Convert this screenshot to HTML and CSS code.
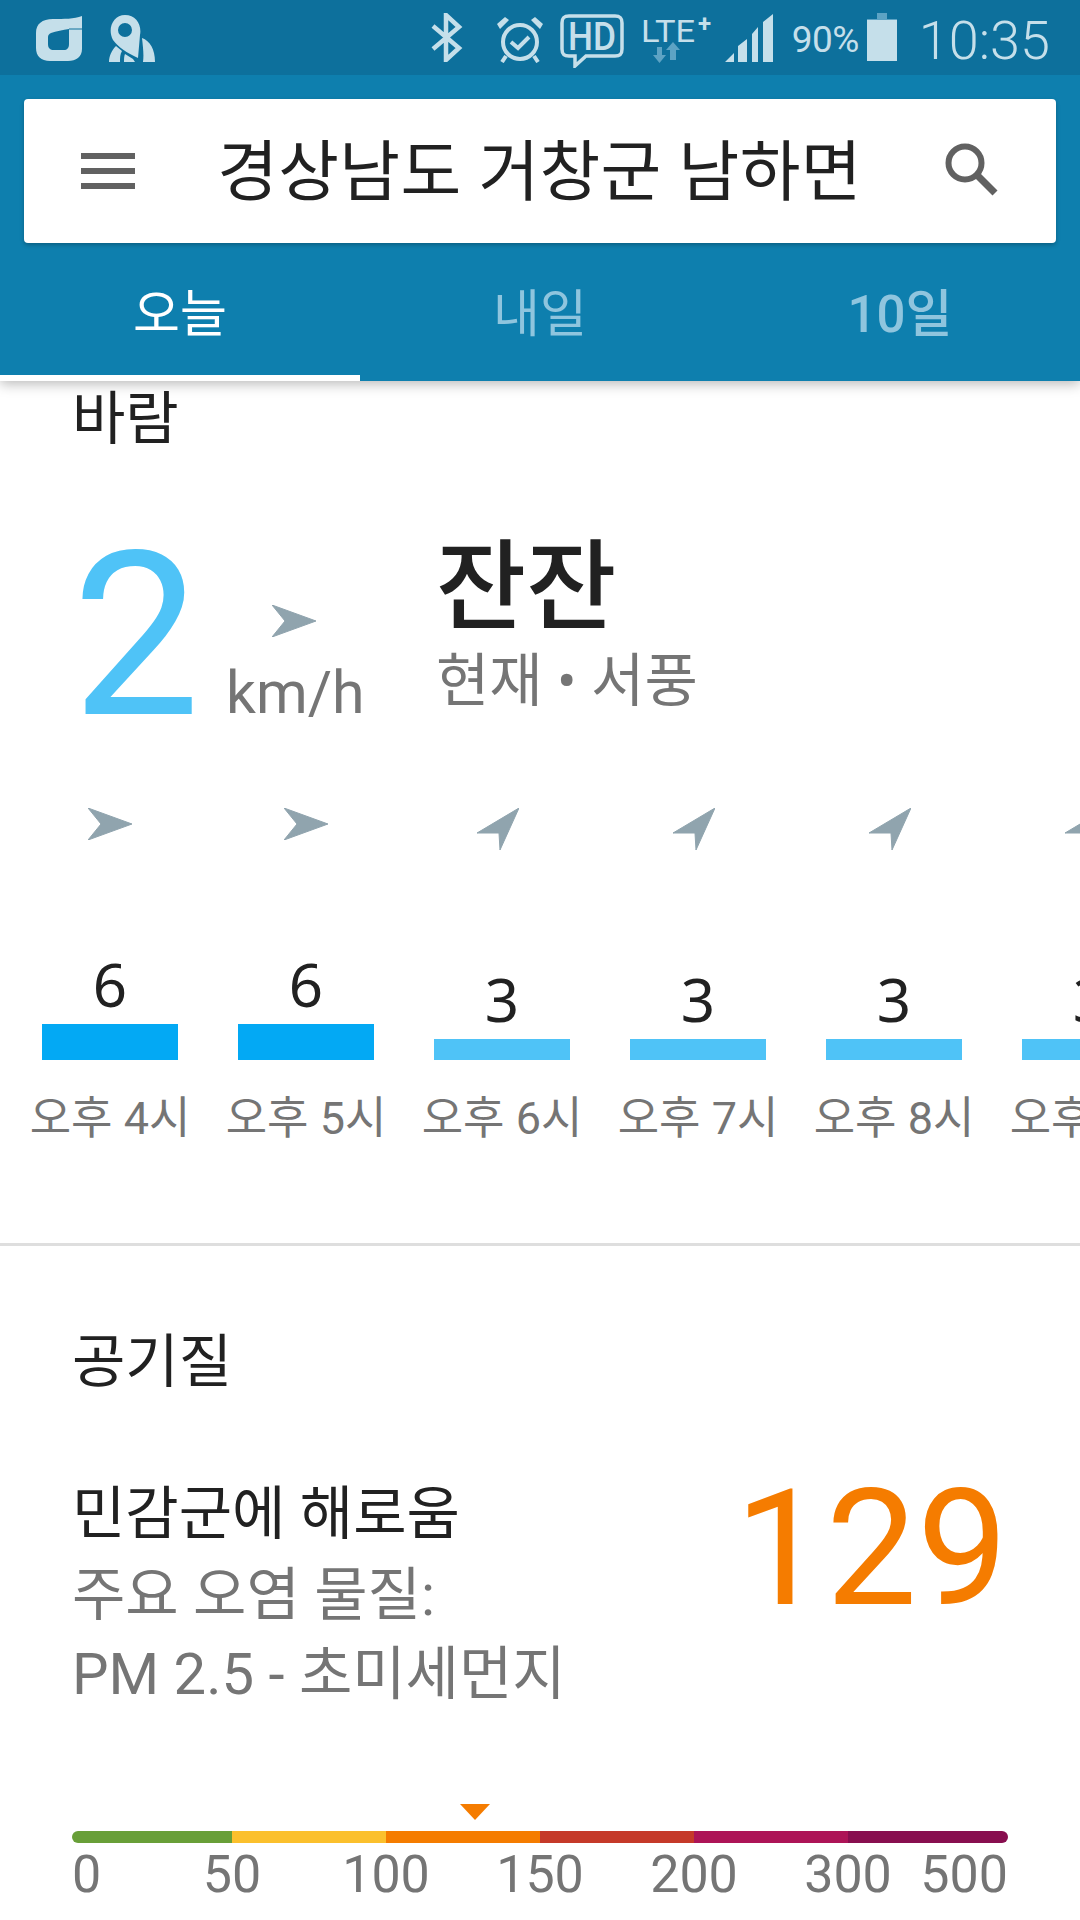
FILE: index.html
```html
<!DOCTYPE html>
<html lang="ko">
<head>
<meta charset="utf-8">
<title>날씨</title>
<link rel="stylesheet" href="styles.css">
</head>
<body>
<div class="screen">
  <header class="header">
    <div class="status">
      <div class="status-left">
        <svg class="i-logo" viewBox="0 0 46 45"><path d="M46 0V33C46 41 40 45 32 45H14C5 45 0 40 0 32V17C0 8 6 3 17 3C28 3 38 3 46 0ZM15 17C13 18 12 19 12 21V28C12 32 14 34 18 34H28C31 34 33 32 33 28V13C27 14 20 15 15 17Z" fill="#c5dfea" fill-rule="evenodd"/><path d="M33 13H46" stroke="#0d709c" stroke-width="1"/></svg>
        <svg class="i-rocket" viewBox="0 0 46 47"><path d="M4 25C-2 14 4 0 16 0C27 0 33 10 31 20L29 43C18 38 9 32 4 25ZM16 8A7 7 0 1 0 16 22A7 7 0 1 0 16 8ZM33 23C41 26 46 34 46 47H34C35 40 34 32 33 23ZM7 31L13 36C11 39 11 43 11 47H0C0 41 3 35 7 31ZM16 39L24 44L26 47H15C15 44 15 41 16 39Z" fill="#c5dfea" fill-rule="evenodd"/></svg>
      </div>
      <div class="status-right">
        <svg class="i-bt" viewBox="0 0 32 49"><path d="M2 13L28 35L15 47V2L28 14L2 36" fill="none" stroke="#c5dfea" stroke-width="4.5"/></svg>
        <svg class="i-alarm" viewBox="0 0 48 48"><circle cx="24" cy="27" r="17" fill="none" stroke="#c5dfea" stroke-width="4"/><path d="M1 9L9 2L13 5L4 14ZM47 9L39 2L35 5L44 14Z" fill="#c5dfea"/><path d="M15 27L22 33L33 22" fill="none" stroke="#c5dfea" stroke-width="4"/><path d="M10 41L6 47M38 41L42 47" stroke="#c5dfea" stroke-width="4"/></svg>
        <svg class="i-hd" viewBox="0 0 64 54"><path d="M9 2H55C60 2 62 4 62 9V35C62 40 60 42 55 42H26L15 52V42H9C4 42 2 40 2 35V9C2 4 4 2 9 2Z" fill="none" stroke="#c5dfea" stroke-width="3.5"/><text x="8" y="36" textLength="48" lengthAdjust="spacingAndGlyphs" class="hd-text">HD</text></svg>
        <svg class="i-lte" viewBox="0 0 74 46"><text x="0" y="25" textLength="54" lengthAdjust="spacingAndGlyphs" class="lte-text">LTE</text><text x="57" y="15" class="lte-plus">+</text><path d="M16 30V38H12L18.5 46L25 38H21V30ZM29 43V33H25L32 25L39 33H35V43Z" fill="#5da3c4"/></svg>
        <svg class="i-signal" viewBox="0 0 48 48"><path d="M0 48L9 39V48ZM13 48V32L22 25V48ZM27 48V20L33 13V48ZM38 48V8L48 0V48Z" fill="#c5dfea"/></svg>
        <span class="battery-pct">90%</span>
        <svg class="i-battery" viewBox="0 0 30 48"><path d="M10 0H20V6H30V12H0V6H10Z" fill="#5da3c4"/><rect y="7" width="30" height="41" fill="#c5dfea"/></svg>
        <span class="clock">10:35</span>
      </div>
    </div>
    <div class="appbar">
      <div class="searchbar">
        <svg class="i-menu" viewBox="0 0 54 36"><path d="M0 0H54V6H0ZM0 15H54V21H0ZM0 30H54V36H0Z" fill="#616161"/></svg>
        <div class="place">경상남도 거창군 남하면</div>
        <svg class="i-search" viewBox="0 0 54 54"><circle cx="21" cy="21" r="16.5" fill="none" stroke="#616161" stroke-width="6"/><path d="M33 33L51 51" stroke="#616161" stroke-width="7"/></svg>
      </div>
      <nav class="tabs">
        <div class="tab tab-active">오늘</div>
        <div class="tab">내일</div>
        <div class="tab tab-bold">10일</div>
      </nav>
    </div>
  </header>

  <main class="content">
    <section class="wind">
      <h2 class="section-title">바람</h2>
      <div class="wind-now">
        <div class="wind-speed">2</div>
        <div class="wind-unit">
          <svg class="arrow-e" viewBox="0 0 44 32"><path d="M0 0L44 16L0 32L13 16Z" fill="#90a4ae" stroke="#90a4ae" stroke-linejoin="round"/></svg>
          <span class="unit-text">km/h</span>
        </div>
        <div class="wind-desc">
          <div class="wind-name">잔잔</div>
          <div class="wind-dir">현재 • 서풍</div>
        </div>
      </div>
      <div class="hours">
        <div class="hour">
          <svg class="arrow-e" viewBox="0 0 44 32"><path d="M0 0L44 16L0 32L13 16Z" fill="#90a4ae" stroke="#90a4ae" stroke-linejoin="round"/></svg>
          <div class="hour-chart"><span class="hour-val">6</span><div class="bar bar-strong"></div></div>
          <div class="hour-label">오후 4시</div>
        </div>
        <div class="hour">
          <svg class="arrow-e" viewBox="0 0 44 32"><path d="M0 0L44 16L0 32L13 16Z" fill="#90a4ae" stroke="#90a4ae" stroke-linejoin="round"/></svg>
          <div class="hour-chart"><span class="hour-val">6</span><div class="bar bar-strong"></div></div>
          <div class="hour-label">오후 5시</div>
        </div>
        <div class="hour">
          <svg class="arrow-ne" viewBox="0 0 42 42"><path d="M42 0L0 25H22L23 42Z" fill="#90a4ae" stroke="#90a4ae" stroke-linejoin="round"/></svg>
          <div class="hour-chart"><span class="hour-val">3</span><div class="bar bar-light"></div></div>
          <div class="hour-label">오후 6시</div>
        </div>
        <div class="hour">
          <svg class="arrow-ne" viewBox="0 0 42 42"><path d="M42 0L0 25H22L23 42Z" fill="#90a4ae" stroke="#90a4ae" stroke-linejoin="round"/></svg>
          <div class="hour-chart"><span class="hour-val">3</span><div class="bar bar-light"></div></div>
          <div class="hour-label">오후 7시</div>
        </div>
        <div class="hour">
          <svg class="arrow-ne" viewBox="0 0 42 42"><path d="M42 0L0 25H22L23 42Z" fill="#90a4ae" stroke="#90a4ae" stroke-linejoin="round"/></svg>
          <div class="hour-chart"><span class="hour-val">3</span><div class="bar bar-light"></div></div>
          <div class="hour-label">오후 8시</div>
        </div>
        <div class="hour">
          <svg class="arrow-ne" viewBox="0 0 42 42"><path d="M42 0L0 25H22L23 42Z" fill="#90a4ae" stroke="#90a4ae" stroke-linejoin="round"/></svg>
          <div class="hour-chart"><span class="hour-val">3</span><div class="bar bar-light"></div></div>
          <div class="hour-label">오후 9시</div>
        </div>
      </div>
    </section>

    <section class="air">
      <h2 class="section-title">공기질</h2>
      <div class="air-main">
        <div class="air-text">
          <div class="air-level">민감군에 해로움</div>
          <div class="air-sub">주요 오염 물질:</div>
          <div class="air-sub">PM 2.5 - 초미세먼지</div>
        </div>
        <div class="air-value">129</div>
      </div>
      <div class="scale">
        <div class="scale-marker-row"><div class="scale-marker"></div></div>
        <div class="scale-bar">
          <div class="seg seg-1"></div>
          <div class="seg seg-2"></div>
          <div class="seg seg-3"></div>
          <div class="seg seg-4"></div>
          <div class="seg seg-5"></div>
          <div class="seg seg-6"></div>
        </div>
        <div class="scale-ticks">
          <span class="tick tick-start">0</span>
          <span class="tick">50</span>
          <span class="tick">100</span>
          <span class="tick">150</span>
          <span class="tick">200</span>
          <span class="tick">300</span>
          <span class="tick tick-end">500</span>
        </div>
      </div>
    </section>
  </main>
</div>
</body>
</html>
```

FILE: styles.css
```css
* { box-sizing: border-box; margin: 0; padding: 0; }

html, body { width: 1080px; height: 1920px; overflow: hidden; background: #fff; }

body {
  font-family: Roboto, "Noto Sans CJK KR", sans-serif;
  color: #212121;
}

svg { display: block; flex: none; }

.screen { width: 1080px; height: 1920px; display: flex; flex-direction: column; overflow: hidden; }

/* Header */
.header {
  flex: none;
  position: relative;
  z-index: 2;
  box-shadow: 0 3px 12px rgba(0, 0, 0, 0.28);
}

.status {
  height: 75px;
  background: #0d709c;
  display: flex;
  justify-content: space-between;
  align-items: flex-start;
  padding: 13px 30px 0 36px;
}

.status-left { display: flex; gap: 27px; padding-top: 3px; }
.i-logo { width: 46px; height: 45px; }
.i-rocket { width: 46px; height: 47px; margin-top: -1px; }

.status-right { display: flex; align-items: flex-start; }
.i-bt { width: 32px; height: 49px; margin-right: 33px; }
.i-alarm { width: 48px; height: 48px; margin-top: 2px; margin-right: 16px; }
.i-hd { width: 64px; height: 54px; margin-top: 1px; margin-right: 17px; }
.i-lte { width: 74px; height: 46px; margin-top: 4px; margin-right: 10px; }
.i-signal { width: 48px; height: 48px; margin-top: 1px; margin-right: 19px; }
.i-battery { width: 30px; height: 48px; margin-right: 22px; }

.hd-text { font: 500 39px Roboto, sans-serif; fill: #c5dfea; }
.lte-text { font: 400 32px Roboto, sans-serif; fill: #c5dfea; }
.lte-plus { font: 700 24px Roboto, sans-serif; fill: #c5dfea; }

.battery-pct {
  font-size: 37px;
  line-height: 40px;
  color: #c5dfea;
  margin-top: 7px;
  margin-right: 8px;
  letter-spacing: -0.5px;
}

.clock {
  font-size: 54px;
  font-weight: 300;
  line-height: 54px;
  color: #c5dfea;
  margin-top: 1px;
}

.appbar { background: #0e7fae; height: 306px; padding-top: 24px; display: flex; flex-direction: column; }

.searchbar {
  margin: 0 24px;
  height: 144px;
  background: #fff;
  border-radius: 4px;
  box-shadow: 0 2px 4px rgba(0, 0, 0, 0.25);
  display: flex;
  align-items: center;
  padding: 0 58px 0 57px;
}

.i-menu { width: 54px; height: 36px; }
.i-search { width: 54px; height: 54px; margin-top: -4px; }

.place {
  flex: 1;
  text-align: center;
  font-size: 66px;
  line-height: 76px;
  padding-top: 4px;
  letter-spacing: 0.4px;
  color: #212121;
  white-space: nowrap;
}

.tabs { flex: 1; display: flex; }

.tab {
  flex: 1;
  text-align: center;
  padding-top: 42px;
  font-size: 51px;
  line-height: 60px;
  color: #8fc5de;
  border-bottom: 6px solid transparent;
}

.tab-active { color: #fff; border-bottom-color: #fff; }
.tab-bold { font-weight: 500; }

/* Content */
.content { flex: 1; min-height: 0; overflow: hidden; background: #fff; }

.section-title {
  font-size: 58px;
  font-weight: 400;
  line-height: 60px;
  color: #212121;
  padding-left: 72px;
}

.wind { border-bottom: 3px solid #dedede; height: 865px; padding-top: 8px; }

.wind-now { display: flex; height: 296px; padding-left: 72px; }

.wind-speed {
  font-size: 228px;
  font-weight: 400;
  line-height: 272px;
  padding-top: 51px;
  width: 154px;
  color: #4fc3f7;
}

.wind-unit {
  width: 210px;
  display: flex;
  flex-direction: column;
  padding-top: 156px;
  padding-left: 46px;
}

.unit-text { font-size: 59px; line-height: 66px; color: #757575; margin-top: 23px; margin-left: -46px; }

.wind-desc { padding-top: 87px; }

.wind-name { font-size: 98px; font-weight: 500; line-height: 104px; color: #212121; }

.wind-dir { font-size: 58px; line-height: 66px; color: #757575; margin-top: 8px; }

.hours { display: flex; width: 1080px; overflow: hidden; margin-top: 63px; padding-left: 12px; }

.hour { flex: none; width: 196px; display: flex; flex-direction: column; align-items: center; }

.arrow-e { width: 44px; height: 32px; }
.arrow-ne { width: 42px; height: 42px; }

.hour-chart {
  height: 220px;
  width: 136px;
  display: flex;
  flex-direction: column;
  justify-content: flex-end;
  align-items: center;
}

.hour .arrow-ne { margin-bottom: -10px; margin-left: -8px; }

.hour-val { font-size: 60px; line-height: 62px; margin-bottom: 9px; color: #212121; font-family: "Noto Sans", sans-serif; }

.bar { width: 136px; }
.bar-strong { height: 36px; background: #03a9f4; }
.bar-light { height: 21px; background: #4fc3f7; }

.hour-label { font-size: 45px; line-height: 50px; color: #757575; margin-top: 34px; white-space: nowrap; }

.air { padding-top: 86px; }

.air-main { display: flex; justify-content: space-between; padding: 0 72px; margin-top: 89px; height: 303px; }

.air-level { font-size: 58px; line-height: 66px; margin-bottom: 9px; color: #212121; }
.air-sub { font-size: 58px; line-height: 79px; color: #757575; }

.air-value { font-size: 162px; font-weight: 400; line-height: 136px; color: #f57c00; }

.scale { padding: 0 72px; }

.scale-marker-row { height: 16px; margin-top: 20px; padding-left: 388px; }
.scale-marker { width: 30px; height: 16px; background: #f57c00; clip-path: polygon(0 0, 100% 0, 50% 100%); }

.scale-bar { display: flex; height: 12px; margin-top: 11px; border-radius: 6px; overflow: hidden; }

.seg { flex: none; width: 154px; }
.seg-1 { width: 160px; background: #689f38; }
.seg-2 { background: #fbc02d; }
.seg-3 { background: #f57c00; }
.seg-4 { background: #c53929; }
.seg-5 { background: #ad1457; }
.seg-6 { width: 160px; background: #880e4f; }

.scale-ticks { display: grid; grid-template-columns: 83px 154px 154px 154px 154px 154px 83px; margin-top: 7px; }

.tick { text-align: center; font-size: 52px; font-weight: 400; line-height: 50px; color: #757575; white-space: nowrap; }
.tick-start { text-align: left; }
.tick-end { justify-self: end; }
```
